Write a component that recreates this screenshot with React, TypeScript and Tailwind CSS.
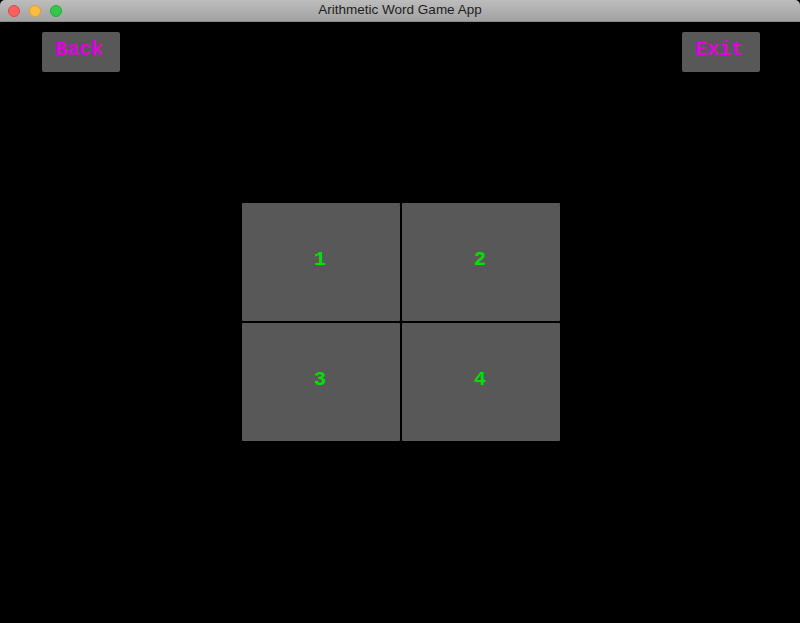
const pixelFont = { fontFamily: '"Liberation Mono", "DejaVu Sans Mono", monospace' }

function TrafficLights() {
  return (
    <div className="flex items-center gap-[9px] pl-[8px]">
      <span className="w-[12px] h-[12px] rounded-full bg-[#fc605c] border border-[#de4a45]" />
      <span className="w-[12px] h-[12px] rounded-full bg-[#fdbc40] border border-[#de9f33]" />
      <span className="w-[12px] h-[12px] rounded-full bg-[#34c84a] border border-[#27aa36]" />
    </div>
  )
}

function NavButton({ label }: { label: string }) {
  return (
    <button
      className="w-[78px] h-[40px] rounded-[2px] bg-[#585858] text-[#e000e0] text-[20px] font-bold flex items-start justify-center pt-[8px] pr-[4px] leading-none"
      style={pixelFont}
    >
      {label}
    </button>
  )
}

export default function App() {
  const cells = ['1', '2', '3', '4']

  return (
    <div className="w-[800px] h-[623px] bg-black flex flex-col overflow-hidden">
      <div className="relative h-[22px] shrink-0 rounded-t-[5px] bg-gradient-to-b from-[#bdbdbd] to-[#a2a2a2] border-b border-[#8a8a8a] flex items-center">
        <TrafficLights />
        <div
          className="absolute inset-0 flex items-center justify-center text-[13.5px] text-[#1e1e1e]"
          style={{ fontFamily: '"Liberation Sans", Arial, sans-serif' }}
        >
          Arithmetic Word Game App
        </div>
      </div>

      <div className="flex justify-between px-[40px] pt-[10px]">
        <div className="pl-[2px]">
          <NavButton label="Back" />
        </div>
        <NavButton label="Exit" />
      </div>

      <div className="flex justify-center pt-[131px] pl-[2px]">
        <div className="grid grid-cols-2 gap-[2px]">
          {cells.map(n => (
            <div
              key={n}
              className="w-[158px] h-[118px] rounded-[1px] bg-[#585858] flex items-center justify-center pb-[5px] pr-[2px] text-[#00e000] text-[20px] font-bold"
              style={pixelFont}
            >
              {n}
            </div>
          ))}
        </div>
      </div>
    </div>
  )
}
